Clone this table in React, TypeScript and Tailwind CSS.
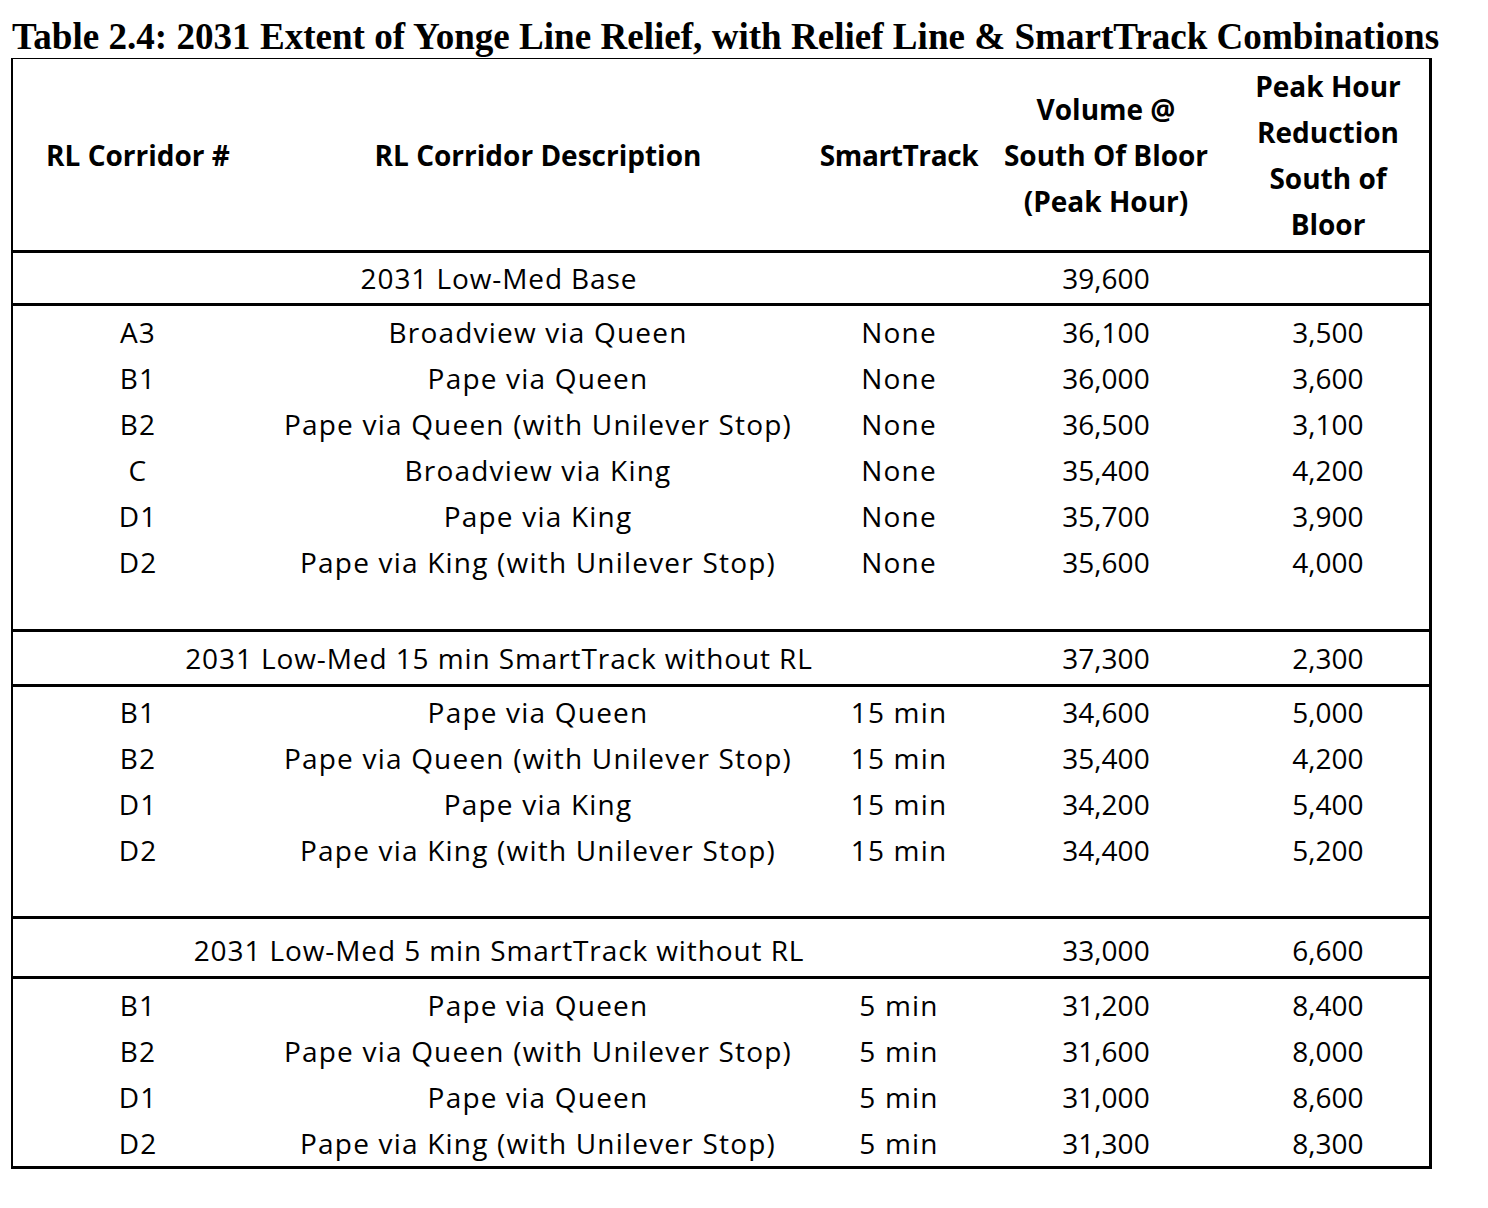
const body = { fontFamily: "'Open Sans', 'Noto Sans', sans-serif" };

type Row = [string, string, string, string, string];

const base: Row[] = [
  ["A3", "Broadview via Queen", "None", "36,100", "3,500"],
  ["B1", "Pape via Queen", "None", "36,000", "3,600"],
  ["B2", "Pape via Queen (with Unilever Stop)", "None", "36,500", "3,100"],
  ["C", "Broadview via King", "None", "35,400", "4,200"],
  ["D1", "Pape via King", "None", "35,700", "3,900"],
  ["D2", "Pape via King (with Unilever Stop)", "None", "35,600", "4,000"],
];

const fifteen: Row[] = [
  ["B1", "Pape via Queen", "15 min", "34,600", "5,000"],
  ["B2", "Pape via Queen (with Unilever Stop)", "15 min", "35,400", "4,200"],
  ["D1", "Pape via King", "15 min", "34,200", "5,400"],
  ["D2", "Pape via King (with Unilever Stop)", "15 min", "34,400", "5,200"],
];

const five: Row[] = [
  ["B1", "Pape via Queen", "5 min", "31,200", "8,400"],
  ["B2", "Pape via Queen (with Unilever Stop)", "5 min", "31,600", "8,000"],
  ["D1", "Pape via Queen", "5 min", "31,000", "8,600"],
  ["D2", "Pape via King (with Unilever Stop)", "5 min", "31,300", "8,300"],
];

const cols = "grid grid-cols-[250px_550px_172px_242px_202px]";

function DataRows({ rows }: { rows: Row[] }) {
  return (
    <>
      {rows.map((r, i) => (
        <div key={i} className={`${cols} h-[46px] items-center text-center`}>
          {r.map((c, j) => (
            <div key={j} className={j < 3 ? "whitespace-nowrap tracking-[1.2px]" : "whitespace-nowrap"}>
              {c}
            </div>
          ))}
        </div>
      ))}
    </>
  );
}

function Section({ label, volume, reduction, h }: { label: string; volume: string; reduction: string; h: string }) {
  return (
    <div className={`${cols} ${h} items-center text-center border-b-[3px] border-black`}>
      <div className="col-span-3 whitespace-nowrap tracking-[0.9px]">{label}</div>
      <div>{volume}</div>
      <div>{reduction}</div>
    </div>
  );
}

export default function App() {
  return (
    <div className="w-[1488px] h-[1208px] bg-white text-black">
      <h1
        className="h-[58px] pl-[12px] pt-[18px] text-[37.1px] font-bold leading-[37px] whitespace-nowrap"
        style={{ fontFamily: "'Liberation Serif', serif" }}
      >
        Table 2.4: 2031 Extent of Yonge Line Relief, with Relief Line &amp; SmartTrack Combinations
      </h1>
      <div
        className="ml-[11px] w-[1421px] border-l-2 border-t border-r-[3px] border-b-[3px] border-black text-[28px] leading-[46px]"
        style={body}
      >
        <div className={`${cols} h-[194px] items-center text-center font-bold border-b-[3px] border-black`}>
          <div>RL Corridor #</div>
          <div>RL Corridor Description</div>
          <div className="tracking-[-0.4px]">SmartTrack</div>
          <div>
            Volume @
            <br />
            South Of Bloor
            <br />
            (Peak Hour)
          </div>
          <div>
            Peak Hour
            <br />
            Reduction
            <br />
            South of
            <br />
            Bloor
          </div>
        </div>
        <Section label="2031 Low-Med Base" volume="39,600" reduction="" h="h-[53px]" />
        <div className="pt-[3px] h-[326px] border-b-[3px] border-black">
          <DataRows rows={base} />
        </div>
        <Section label="2031 Low-Med 15 min SmartTrack without RL" volume="37,300" reduction="2,300" h="h-[55px]" />
        <div className="pt-[2px] h-[232px] border-b-[3px] border-black">
          <DataRows rows={fifteen} />
        </div>
        <Section label="2031 Low-Med 5 min SmartTrack without RL" volume="33,000" reduction="6,600" h="h-[60px] pt-[5px]" />
        <div className="pt-[3px]">
          <DataRows rows={five} />
        </div>
      </div>
    </div>
  );
}
